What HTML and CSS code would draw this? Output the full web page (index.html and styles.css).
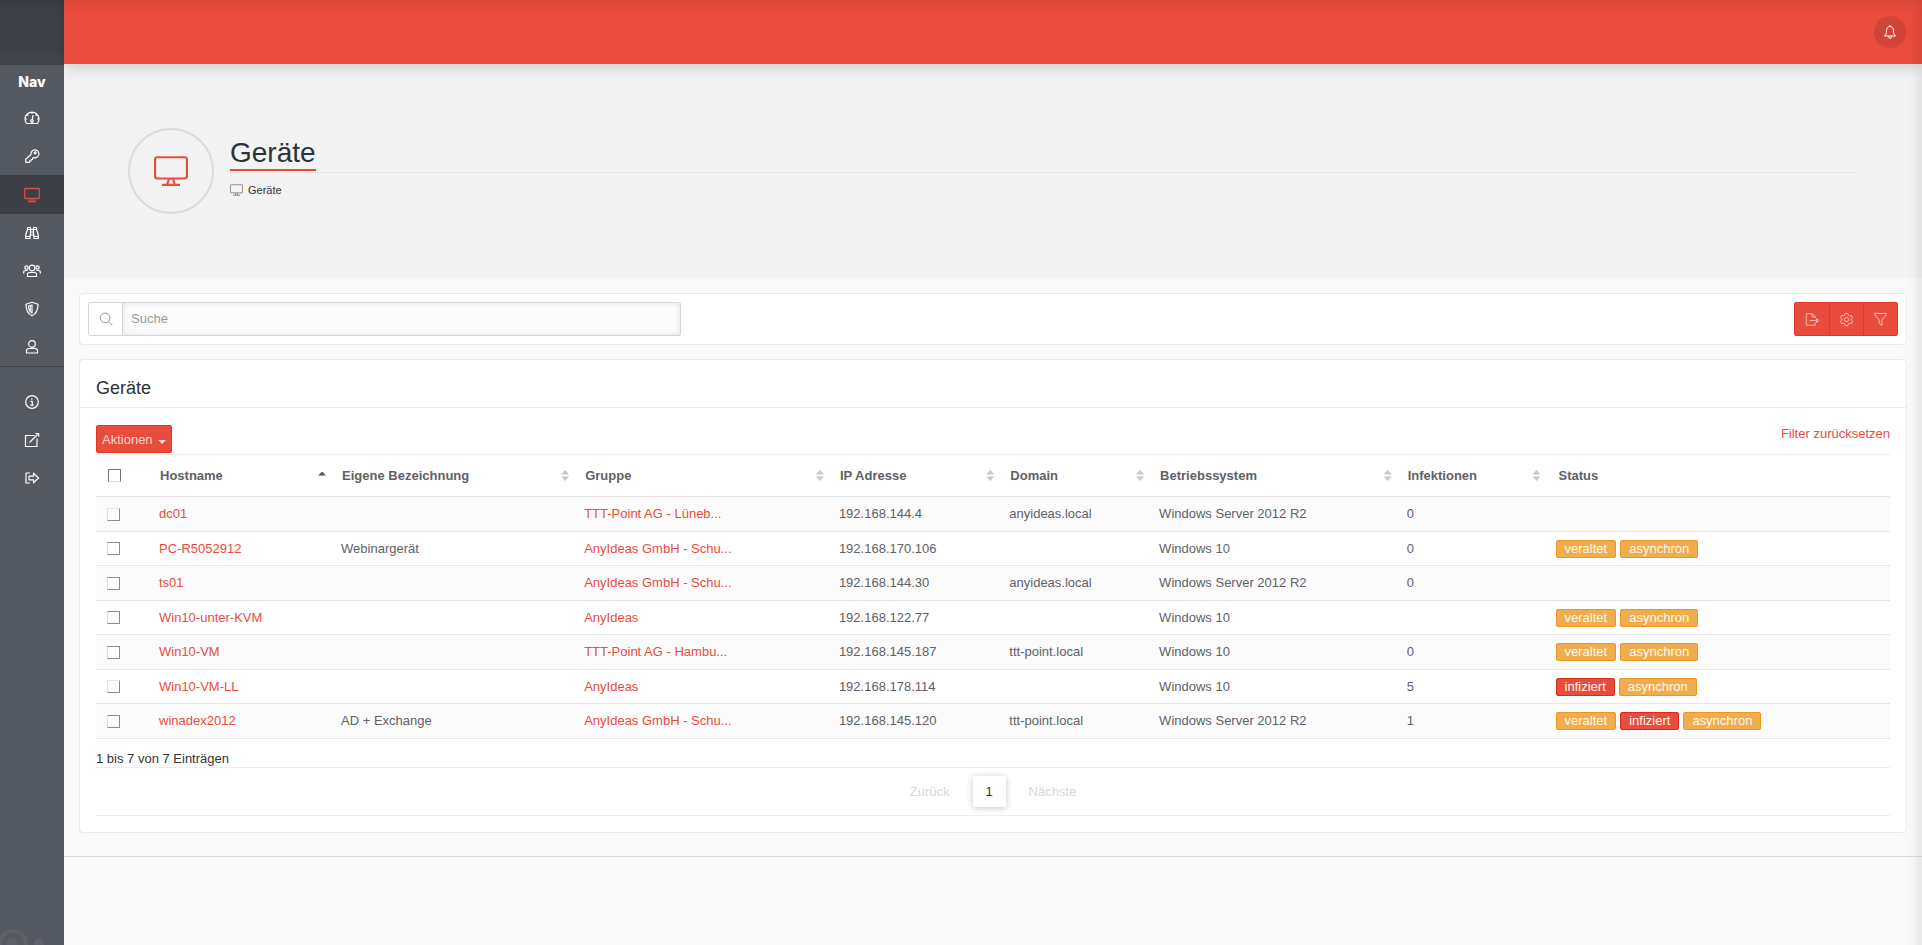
FILE: index.html
```html
<!DOCTYPE html>
<html lang="de">
<head>
<meta charset="utf-8">
<meta name="viewport" content="width=device-width, initial-scale=1">
<title>Geräte</title>
<link rel="stylesheet" href="styles.css">
</head>
<body>
<svg class="sprite" aria-hidden="true">
  <symbol id="i-desktop" viewBox="0 0 32 28"><rect x="1" y="1" width="30" height="20" rx="2"/><path d="M14 21.500l-1.500 5M18 21.500l1.500 5M7.500 27h17"/></symbol>
  <symbol id="i-gauge" viewBox="0 0 16 16"><path d="M2.500 13.500A7 7 0 1 1 13.500 13.500zM8 2v2M1.500 9h1.500M13 9h1.500M3.500 5l1 .700M12.500 5l-1 .700M8.300 10l.700-5"/><circle cx="8" cy="11" r="1.300"/></symbol>
  <symbol id="i-key" viewBox="0 0 16 16"><path d="M7 6.500a4 4 0 1 1 3 3.200L8.500 10v1.500H7V13H5.500v1.300H1.700v-3z"/><circle cx="11.200" cy="4.800" r="1"/></symbol>
  <symbol id="i-binoculars" viewBox="0 0 16 16"><path d="M3.500 2.500h3v2h3v-2h3v2c.700 2 1.800 4 1.800 6.500v2.500H10V10H6v3.500H1.700V11c0-2.500 1.100-4.500 1.800-6.500zM3.500 4.500h3V10M9.500 4.500h3M9.500 4.500V10M6.500 7h3M1.700 11.500H6M10 11.500h4.300"/></symbol>
  <symbol id="i-users" viewBox="0 0 18 16"><circle cx="9" cy="5" r="2.800"/><circle cx="3.500" cy="4.500" r="1.700"/><circle cx="14.500" cy="4.500" r="1.700"/><path d="M4.500 13.500v-2q0-2 2-2h5q2 0 2 2v2zM.700 10.500v-1q0-2 2-2h2M17.300 10.500v-1q0-2-2-2h-2"/></symbol>
  <symbol id="i-shield" viewBox="0 0 16 16"><path d="M8 1.300l6 2c0 5.500-1.500 9.500-6 11.500C3.500 12.800 2 8.800 2 3.300z"/><path d="M8 4v8C5.500 10.500 4.600 8 4.500 5z"/><path d="M6.300 5v4.500"/></symbol>
  <symbol id="i-user" viewBox="0 0 16 16"><circle cx="8" cy="5" r="3.300"/><path d="M2.500 14v-2q0-2.500 2.500-2.500h6q2.500 0 2.500 2.500v2z"/></symbol>
  <symbol id="i-info" viewBox="0 0 16 16"><circle cx="8" cy="8" r="6.300"/><path d="M6.500 7.300H8.300V11M6.300 11.200h3.500M7.800 4.300v1.400"/></symbol>
  <symbol id="i-external" viewBox="0 0 16 16"><path d="M10.500 3.500h-9v11H13V6.500M5.500 10.500L13.500 2.500M11.500 1.500h3.200v3.200"/></symbol>
  <symbol id="i-logout" viewBox="0 0 16 16"><path d="M6 3H2v10h4M5 6.200h4.500V3.200L14.500 8l-5 4.800V9.800H5z"/></symbol>
  <symbol id="i-bell" viewBox="0 0 16 16"><path d="M8 1v1.200M2.500 12h11c-1.500-1.300-2-2.500-2-5.300C11.500 4 10 2.500 8 2.500S4.500 4 4.500 6.700c0 2.800-.500 4-2 5.300zM6.500 12.500q0 1.800 1.500 1.800t1.500-1.800"/></symbol>
  <symbol id="i-search" viewBox="0 0 16 16"><circle cx="7" cy="6.700" r="5.500"/><path d="M11 10.700l4.300 4.300"/></symbol>
  <symbol id="i-export" viewBox="0 0 17 16"><path d="M11.500 6.500V4.500L8.500 1.500H1.500v13h10v-3M8 1.500V5h3.500M5 9.200h8M13 7l3 2.200-3 2.200z"/></symbol>
  <symbol id="i-gear" viewBox="0 0 16 16"><circle cx="8" cy="8" r="2.200"/><path d="M6.500 1.500h3l.500 2 1.200.700 2-.600 1.300 2.400-1.500 1.400v1.200l1.500 1.400-1.300 2.400-2-.600-1.200.700-.500 2h-3l-.500-2-1.200-.700-2 .600L1.500 10 3 8.600V7.400L1.500 6l1.300-2.400 2 .600L6 3.500z"/></symbol>
  <symbol id="i-filter" viewBox="0 0 16 16"><path d="M1.500 1.500h13v1L9.500 8.500v6L6.500 12V8.500L1.500 2.500z"/></symbol>
</svg>

<aside class="sidebar">
  <div class="brand"></div>
  <nav class="nav" aria-label="Navigation">
    <h2 class="nav-title">Nav</h2>
    <a class="nav-link" href="#dashboard" aria-label="Dashboard"><svg class="icon"><use href="#i-gauge"/></svg></a>
    <a class="nav-link" href="#lizenzen" aria-label="Lizenzen"><svg class="icon"><use href="#i-key"/></svg></a>
    <a class="nav-link active" href="#geraete" aria-label="Geräte"><svg class="icon heavy"><use href="#i-desktop"/></svg></a>
    <a class="nav-link" href="#suche" aria-label="Funde"><svg class="icon"><use href="#i-binoculars"/></svg></a>
    <a class="nav-link" href="#gruppen" aria-label="Gruppen"><svg class="icon wide"><use href="#i-users"/></svg></a>
    <a class="nav-link" href="#profile" aria-label="Profile"><svg class="icon"><use href="#i-shield"/></svg></a>
    <a class="nav-link" href="#benutzer" aria-label="Benutzer"><svg class="icon"><use href="#i-user"/></svg></a>
    <hr class="nav-rule">
    <a class="nav-link" href="#info" aria-label="Info"><svg class="icon"><use href="#i-info"/></svg></a>
    <a class="nav-link" href="#extern" aria-label="Extern"><svg class="icon"><use href="#i-external"/></svg></a>
    <a class="nav-link" href="#abmelden" aria-label="Abmelden"><svg class="icon"><use href="#i-logout"/></svg></a>
  </nav>
  <svg class="watermark" viewBox="0 0 64 18" aria-hidden="true"><circle cx="13" cy="17" r="13"/><circle class="dot" cx="12" cy="16" r="5"/><circle class="dot" cx="39" cy="16" r="5"/></svg>
</aside>

<div class="page">
  <header class="topbar">
    <button class="bell" type="button" aria-label="Benachrichtigungen"><svg class="icon"><use href="#i-bell"/></svg></button>
  </header>

  <section class="hero">
    <div class="hero-badge"><svg class="hero-icon"><use href="#i-desktop"/></svg></div>
    <div class="hero-text">
      <div class="hero-head"><h1 class="hero-title">Geräte</h1></div>
      <p class="crumb"><svg class="crumb-icon"><use href="#i-desktop"/></svg>Geräte</p>
    </div>
  </section>

  <main class="content">
    <section class="panel toolbar">
      <div class="search">
        <label class="search-label" for="q" aria-label="Suche"><svg class="icon"><use href="#i-search"/></svg></label>
        <input class="search-input" id="q" type="text" placeholder="Suche">
      </div>
      <div class="tools">
        <button class="tool" type="button" aria-label="Exportieren"><svg class="icon"><use href="#i-export"/></svg></button>
        <button class="tool" type="button" aria-label="Einstellungen"><svg class="icon"><use href="#i-gear"/></svg></button>
        <button class="tool" type="button" aria-label="Filter"><svg class="icon"><use href="#i-filter"/></svg></button>
      </div>
    </section>

    <section class="panel">
      <h2 class="panel-title">Geräte</h2>
      <div class="panel-body">
        <div class="actions">
          <button class="action-btn" type="button">Aktionen<span class="caret"></span></button>
          <a class="reset" href="#reset">Filter zurücksetzen</a>
        </div>
        <table class="devices">
          <colgroup><col class="c-check"><col class="c-host"><col class="c-name"><col class="c-group"><col class="c-ip"><col class="c-domain"><col class="c-os"><col class="c-inf"><col></colgroup>
          <thead>
            <tr>
              <th class="check"><input type="checkbox" aria-label="Alle auswählen"></th>
              <th><button class="sort asc" type="button">Hostname</button></th>
              <th><button class="sort" type="button">Eigene Bezeichnung</button></th>
              <th><button class="sort" type="button">Gruppe</button></th>
              <th><button class="sort" type="button">IP Adresse</button></th>
              <th><button class="sort" type="button">Domain</button></th>
              <th><button class="sort" type="button">Betriebssystem</button></th>
              <th><button class="sort" type="button">Infektionen</button></th>
              <th class="plain">Status</th>
            </tr>
          </thead>
          <tbody>
            <tr><td class="check"><input type="checkbox" aria-label="dc01"></td><td><a href="#dc01">dc01</a></td><td></td><td><a href="#g1">TTT-Point AG - Lüneb...</a></td><td>192.168.144.4</td><td>anyideas.local</td><td>Windows Server 2012 R2</td><td>0</td><td></td></tr>
            <tr><td class="check"><input type="checkbox" aria-label="PC-R5052912"></td><td><a href="#pc">PC-R5052912</a></td><td>Webinargerät</td><td><a href="#g2">AnyIdeas GmbH - Schu...</a></td><td>192.168.170.106</td><td></td><td>Windows 10</td><td>0</td><td><div class="tags"><span class="tag">veraltet</span><span class="tag">asynchron</span></div></td></tr>
            <tr><td class="check"><input type="checkbox" aria-label="ts01"></td><td><a href="#ts01">ts01</a></td><td></td><td><a href="#g2">AnyIdeas GmbH - Schu...</a></td><td>192.168.144.30</td><td>anyideas.local</td><td>Windows Server 2012 R2</td><td>0</td><td></td></tr>
            <tr><td class="check"><input type="checkbox" aria-label="Win10-unter-KVM"></td><td><a href="#kvm">Win10-unter-KVM</a></td><td></td><td><a href="#g3">AnyIdeas</a></td><td>192.168.122.77</td><td></td><td>Windows 10</td><td></td><td><div class="tags"><span class="tag">veraltet</span><span class="tag">asynchron</span></div></td></tr>
            <tr><td class="check"><input type="checkbox" aria-label="Win10-VM"></td><td><a href="#vm">Win10-VM</a></td><td></td><td><a href="#g4">TTT-Point AG - Hambu...</a></td><td>192.168.145.187</td><td>ttt-point.local</td><td>Windows 10</td><td>0</td><td><div class="tags"><span class="tag">veraltet</span><span class="tag">asynchron</span></div></td></tr>
            <tr><td class="check"><input type="checkbox" aria-label="Win10-VM-LL"></td><td><a href="#vmll">Win10-VM-LL</a></td><td></td><td><a href="#g3">AnyIdeas</a></td><td>192.168.178.114</td><td></td><td>Windows 10</td><td>5</td><td><div class="tags"><span class="tag danger">infiziert</span><span class="tag">asynchron</span></div></td></tr>
            <tr><td class="check"><input type="checkbox" aria-label="winadex2012"></td><td><a href="#winadex">winadex2012</a></td><td>AD + Exchange</td><td><a href="#g2">AnyIdeas GmbH - Schu...</a></td><td>192.168.145.120</td><td>ttt-point.local</td><td>Windows Server 2012 R2</td><td>1</td><td><div class="tags"><span class="tag">veraltet</span><span class="tag danger">infiziert</span><span class="tag">asynchron</span></div></td></tr>
          </tbody>
        </table>
        <p class="summary">1 bis 7 von 7 Einträgen</p>
        <div class="pager">
          <button class="pager-step" type="button" disabled>Zurück</button>
          <button class="pager-page" type="button" aria-current="page">1</button>
          <button class="pager-step" type="button" disabled>Nächste</button>
        </div>
      </div>
    </section>
  </main>
  <footer class="footer"></footer>
</div>
</body>
</html>
```
FILE: styles.css
```css
* { box-sizing: border-box; }

body {
  margin: 0;
  min-height: 100vh;
  display: grid;
  grid-template-columns: 64px minmax(0, 1fr);
  background: #f9f9f9;
  color: #333;
  font-family: "Liberation Sans", Arial, sans-serif;
  font-size: 13px;
  line-height: 18px;
}

/* soft shade along the top and right window edges */
body::after {
  content: "";
  position: fixed;
  inset: 0 0 -24px -24px;
  z-index: 2;
  box-shadow: inset -4px 4px 12px rgba(0, 0, 0, 0.09);
  pointer-events: none;
}

button, input { font: inherit; }
button { cursor: pointer; }
a { color: #e84c3d; text-decoration: none; }

.sprite { position: absolute; width: 0; height: 0; }
svg { fill: none; stroke: currentColor; stroke-linejoin: round; }
.icon { display: block; width: 16px; height: 16px; }
.icon.wide { width: 18px; }
.icon.heavy { stroke-width: 3; }

.sidebar {
  display: flex;
  flex-direction: column;
  background: #555961;
  color: #fff;
  overflow: hidden;
}
.brand { height: 65px; background: linear-gradient(#3e4148 75%, #44474e); box-shadow: inset -4px 0 8px rgba(0, 0, 0, 0.08); }
.nav-title {
  margin: 0;
  font: 800 14px/34px Inter, "Liberation Sans", sans-serif;
  text-align: center;
}
.nav-link { display: flex; height: 38px; align-items: center; justify-content: center; color: #fff; }
.nav-link .icon { stroke-width: 1.2; }
.nav-link.active { height: 39px; background: #3c3f46; color: #d94a3e; }
.nav-link.active .icon { stroke-width: 3; }
.nav-rule { width: 100%; margin: 0 0 16px; border: 0; border-top: 1px solid #43464d; }
.watermark { display: block; width: 64px; height: 18px; margin-top: auto; color: #5d6169; stroke-width: 4; }
.watermark .dot { fill: currentColor; stroke: none; }

.page { display: flex; flex-direction: column; }
.topbar {
  display: flex;
  height: 64px;
  padding: 0 16px;
  align-items: center;
  justify-content: flex-end;
  background: #e94d3d;
  box-shadow: 0 2px 16px rgba(0, 0, 0, 0.2);
  clip-path: inset(0 0 -24px 0);
  z-index: 1;
}
.bell {
  display: grid;
  width: 32px;
  height: 32px;
  padding: 0;
  place-items: center;
  border: 0;
  border-radius: 50%;
  background: #d14538;
  color: #fff;
}

.hero { display: flex; height: 214px; padding: 64px; gap: 16px; background: #f3f3f3; }
.hero-badge {
  display: grid;
  width: 86px;
  height: 86px;
  place-items: center;
  border: 2px solid #dcdcdc;
  border-radius: 50%;
  color: #e84c3d;
}
.hero-icon { width: 34px; height: 30px; stroke-width: 2; }
.hero-text { flex: 1; padding-top: 9px; }
.hero-head { display: flex; border-bottom: 1px dotted #ddd; }
.hero-title {
  margin: 0 0 1px;
  border-bottom: 2px solid #e84c3d;
  color: #2e3136;
  font-size: 28px;
  font-weight: 400;
  line-height: 32px;
}
.crumb { display: flex; margin: 8px 0 0; gap: 5px; align-items: center; font-size: 11px; }
.crumb-icon { width: 13px; height: 12px; color: #777; stroke-width: 2; }

.content { display: grid; padding: 15px 15px 23px; gap: 14px; }
.panel { border: 1px solid #eaeaea; border-radius: 4px; background: #fff; }
.toolbar { display: flex; padding: 8px; justify-content: space-between; }

.search {
  display: flex;
  width: 593px;
  height: 34px;
  border: 1px solid #d5d5d5;
  border-radius: 2px;
}
.search-label { display: grid; width: 34px; place-items: center; border-right: 1px solid #d5d5d5; color: #888; }
.search-label .icon { width: 14px; height: 14px; }
.search-input {
  flex: 1;
  min-width: 0;
  padding: 0 8px;
  border: 0;
  background: #fcfcfc;
  box-shadow: inset 0 0 6px rgba(0, 0, 0, 0.1);
  color: #333;
}
.search-input::placeholder { color: #999; opacity: 1; }

.tools { display: flex; border: 1px solid #e53525; border-radius: 2px; background: #e84c3d; }
.tool {
  display: grid;
  width: 34px;
  padding: 0;
  place-items: center;
  border: 0;
  background: none;
  color: #f8c6c1;
}
.tool + .tool { border-left: 1px solid #e53525; }
.tool .icon { width: 15px; height: 15px; }

.panel-title {
  margin: 0;
  padding: 16px 16px 7px;
  border-bottom: 1px solid #eee;
  color: #2e3136;
  font-size: 18px;
  font-weight: 400;
  line-height: 24px;
}
.panel-body { padding: 17px 16px 16px; }
.actions { display: flex; height: 29px; justify-content: space-between; align-items: flex-start; }
.action-btn {
  display: flex;
  height: 28px;
  padding: 2px 5px 0;
  gap: 5px;
  align-items: center;
  border: 1px solid #e53525;
  border-radius: 2px;
  background: #e84c3d;
  color: #fbd5d1;
}
.caret { margin-top: 3px; border: 4px solid transparent; border-top-color: #fbd5d1; border-bottom: 0; }

.devices {
  width: 100%;
  border-collapse: collapse;
  table-layout: fixed;
  border-top: 1px solid #eee;
  color: #5f6165;
  text-align: left;
}
.c-check { width: 55px; }
.c-host { width: 10.15%; }
.c-name { width: 13.55%; }
.c-group { width: 14.2%; }
.c-ip { width: 9.5%; }
.c-domain { width: 8.35%; }
.c-os { width: 13.8%; }
.c-inf { width: 8.3%; }
.devices th { height: 42px; padding: 0 7px 0 9px; }
.devices td { height: 34px; padding: 0 8px; }
.devices tr { border-bottom: 1px solid #e6e6e6; }
.devices tbody tr:nth-child(odd) { background: #fbfbfb; }
.devices tbody tr:nth-child(odd) td { height: 35px; }
.devices th.plain { padding-left: 11px; }
.devices th.check { padding-left: 12px; }
.devices td.check { padding-left: 11px; }

.devices input {
  display: block;
  width: 13px;
  height: 13px;
  margin: 0;
  appearance: none;
  border: 1px solid #8c8c8c;
  border-left-color: #ddd;
  background: #fff;
}
.devices thead input { border-color: #777 #777 #ddd; }
.devices tbody tr:nth-child(5n + 1) input { border-top-color: #e6e6e6; }

.sort {
  display: flex;
  width: 100%;
  padding: 0;
  align-items: center;
  justify-content: space-between;
  border: 0;
  background: none;
  color: inherit;
  font-weight: 700;
  text-align: left;
}
.sort::after {
  content: "";
  width: 8px;
  height: 11px;
  background: #c8c8ca;
  clip-path: polygon(50% 0, 100% 42%, 0 42%, 0 58%, 100% 58%, 50% 100%, 0 58%, 0 42%);
}
.sort.asc::after { height: 4px; margin-bottom: 4px; background: #55585e; clip-path: polygon(50% 0, 100% 100%, 0 100%); }

.tags { display: flex; gap: 4px; }
.tag {
  padding: 0 8px;
  border: 1px solid #ec971f;
  border-radius: 2px;
  background: #f0ad4e;
  color: #fff8ec;
  line-height: 16px;
}
.tag.danger { border-color: #d62c1a; background: #e84c3d; }

.summary { margin: 11px 0 0; line-height: 17px; }
.pager {
  display: flex;
  height: 49px;
  gap: 23px;
  align-items: center;
  justify-content: center;
  border: solid #eee;
  border-width: 1px 0;
}
.pager-step { padding: 0; border: 0; background: none; color: #d8d8d8; }
.pager-page {
  width: 33px;
  height: 31px;
  padding: 0;
  border: 0;
  border-radius: 2px;
  background: #fff;
  box-shadow: 0 1px 7px rgba(0, 0, 0, 0.22);
  color: #333;
}

.footer { flex: 1; border-top: 1px solid #ddd; }
```
